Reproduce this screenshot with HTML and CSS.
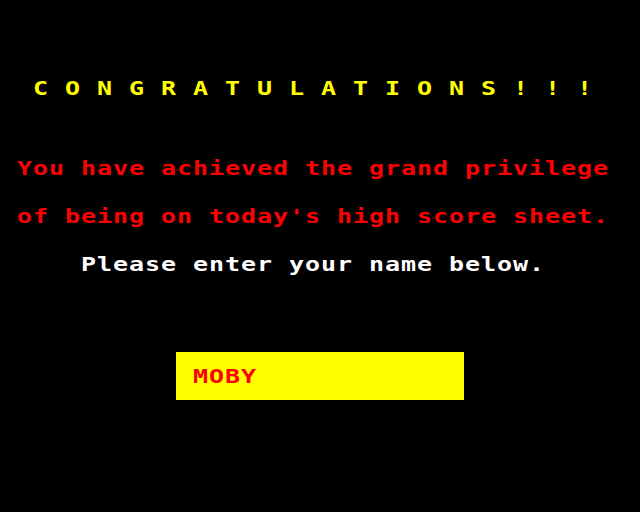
FILE: index.html
```html
<!DOCTYPE html>
<html>
<head>
<meta charset="utf-8">
<link rel="stylesheet" href="styles.css">
</head>
<body>
<div class="screen">
  <div class="row title"><span class="txt">C O N G R A T U L A T I O N S ! ! !</span></div>
  <div class="row red first"><span class="txt">You have achieved the grand privilege</span></div>
  <div class="row red second"><span class="txt">of being on today's high score sheet.</span></div>
  <div class="row white"><span class="txt">Please enter your name below.</span></div>
  <div class="namebox"><span class="txt">MOBY</span></div>
</div>
</body>
</html>
```
FILE: styles.css
```css
html, body {
  margin: 0;
  padding: 0;
  background: #000;
}
.screen {
  width: 640px;
  height: 512px;
  background: #000;
  padding-top: 80px;
  box-sizing: border-box;
  overflow: hidden;
  font-family: "DejaVu Sans Mono", monospace;
  font-weight: bold;
  font-size: 20px;
  line-height: 16px;
}
.row {
  height: 16px;
  white-space: pre;
}
.txt {
  display: inline-block;
  letter-spacing: calc(12.8px - 1ch);
  transform: scaleX(1.25);
  transform-origin: left top;
  white-space: pre;
}
.title {
  color: #ffff00;
  padding-left: 33px;
}
.red {
  color: #ff0000;
  padding-left: 17px;
}
.red.first {
  margin-top: 64px;
}
.red.second {
  margin-top: 32px;
}
.white {
  color: #ffffff;
  padding-left: 81px;
  margin-top: 32px;
}
.namebox {
  margin-top: 80px;
  margin-left: 176px;
  width: 288px;
  height: 48px;
  box-sizing: border-box;
  padding: 16px 0 0 17px;
  background: #ffff00;
  color: #ff0000;
}
```
